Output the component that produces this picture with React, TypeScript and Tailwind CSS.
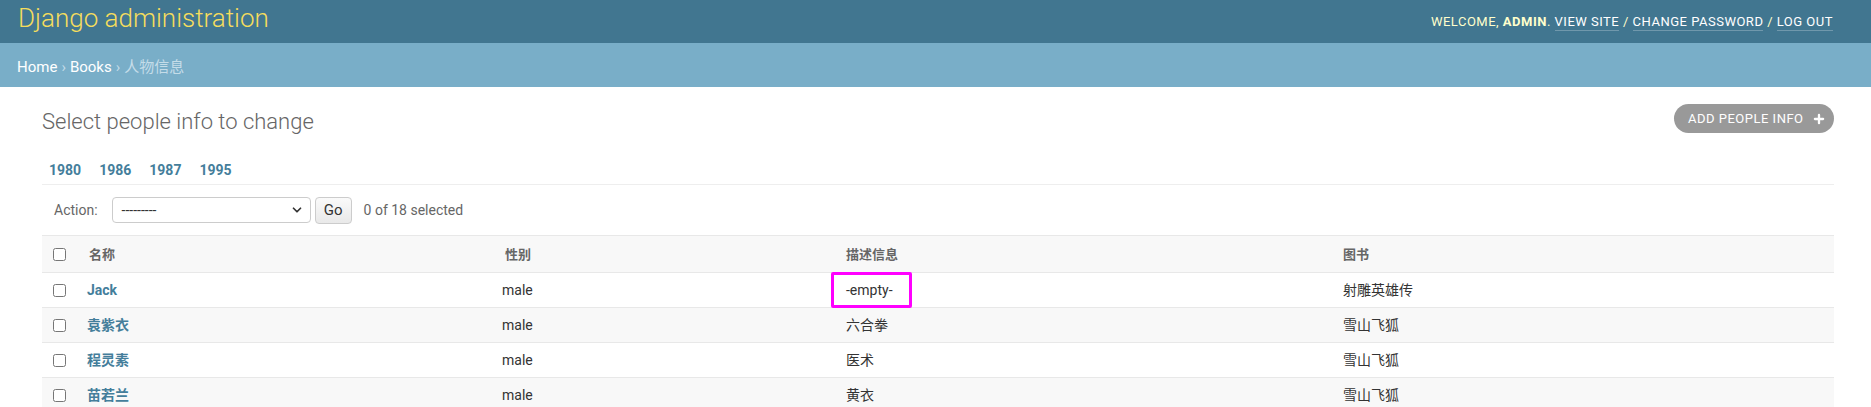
import React from 'react';
import { ChevronDown, Plus } from 'lucide-react';

const rows = [
  { name: 'Jack', gender: 'male', desc: '-empty-', book: '射雕英雄传', marked: true },
  { name: '袁紫衣', gender: 'male', desc: '六合拳', book: '雪山飞狐' },
  { name: '程灵素', gender: 'male', desc: '医术', book: '雪山飞狐' },
  { name: '苗若兰', gender: 'male', desc: '黄衣', book: '雪山飞狐' },
];

const years = ['1980', '1986', '1987', '1995'];

const cols = 'grid grid-cols-[36px_416px_341px_497px_1fr] items-center';

const Checkbox = () => (
  <input type="checkbox" className="w-[13px] h-[13px] m-0 block" />
);

const App: React.FC = () => {
  return (
    <div className="min-h-[407px] bg-white font-['Roboto','Noto_Sans_CJK_SC',sans-serif] text-[#333]">
      {/* Header */}
      <div className="h-[43px] bg-[#417690] flex items-center justify-between pl-[18px] pr-[38px]">
        <h1 className="text-[26px] font-light text-[#f5dd5d] leading-none -mt-[7px]">Django administration</h1>
        <div className="text-[13px] uppercase tracking-[0.5px] text-[#ffc]">
          WELCOME, <strong className="font-bold">ADMIN</strong>.{' '}
          <a className="text-white border-b border-white/25 pb-[1px]">View site</a> /{' '}
          <a className="text-white border-b border-white/25 pb-[1px]">Change password</a> /{' '}
          <a className="text-white border-b border-white/25 pb-[1px]">Log out</a>
        </div>
      </div>

      {/* Breadcrumbs */}
      <div className="h-[44px] bg-[#79aec8] flex items-center pl-[17px] pt-[4px] text-[15px] text-white">
        <a>Home</a>
        <span className="mx-[4px] text-[#c4dce8]">›</span>
        <a>Books</a>
        <span className="mx-[4px] text-[#c4dce8]">›</span>
        <span className="text-[#c4dce8]">人物信息</span>
      </div>

      {/* Content */}
      <div className="pl-[42px] pr-[37px]">
        <div className="flex items-center justify-between pt-[17px] h-[46px]">
          <h2 className="text-[22px] font-light text-[#666] mt-[6px]">Select people info to change</h2>
          <a className="h-[29px] w-[160px] rounded-full bg-[#999] text-white text-[13px] uppercase tracking-[0.5px] flex items-center pl-[14px] gap-[8px]">
            Add people info
            <Plus size={14} strokeWidth={4} />
          </a>
        </div>

        {/* Date hierarchy */}
        <div className="h-[52px] border-b border-[#eee] flex items-end pb-[4px] pl-[7px] gap-[18px]">
          {years.map((y) => (
            <a key={y} className="text-[14px] font-bold text-[#447e9b] leading-[20px]">
              {y}
            </a>
          ))}
        </div>

        {/* Actions */}
        <div className="h-[50px] flex items-center pl-[12px] text-[14px] text-[#666]">
          <span>Action:</span>
          <div className="ml-[14px] w-[199px] h-[26px] border border-[#ccc] rounded-[4px] flex items-center justify-between pl-[9px] pr-[6px] text-[#333] text-[14px]">
            <span>---------</span>
            <ChevronDown size={14} strokeWidth={3} className="text-[#333]" />
          </div>
          <div className="ml-[4px] w-[37px] h-[27px] border border-[#ccc] rounded-[4px] bg-gradient-to-b from-[#fafafa] to-[#e9e9e9] flex items-center justify-center text-[15px] text-[#333]">
            Go
          </div>
          <span className="ml-[12px]">0 of 18 selected</span>
        </div>

        {/* Results table */}
        <div className={`${cols} h-[38px] bg-[#f8f8f8] border-y border-[#e8e8e8] text-[13px] font-semibold text-[#666]`}>
          <div className="pl-[11px]"><Checkbox /></div>
          <div className="pl-[11px] pt-[1px]">名称</div>
          <div className="pl-[11px] pt-[1px]">性别</div>
          <div className="pl-[11px] pt-[1px]">描述信息</div>
          <div className="pl-[11px] pt-[1px]">图书</div>
        </div>
        {rows.map((r, i) => (
          <div
            key={r.name}
            className={`${cols} h-[35px] border-b border-[#e8e8e8] text-[14px] ${i % 2 === 1 ? 'bg-[#f8f8f8]' : 'bg-white'}`}
          >
            <div className="pl-[11px]"><Checkbox /></div>
            <div className="pl-[9px]"><a className="font-bold text-[#447e9b]">{r.name}</a></div>
            <div className="pl-[8px]">{r.gender}</div>
            <div className="pl-[11px]">
              <span className="relative inline-block">
                {r.desc}
                {r.marked && (
                  <span className="absolute -left-[15px] -right-[19px] -top-[8px] -bottom-[7px] border-[3px] border-[#ff00ff] rounded-[2px]" />
                )}
              </span>
            </div>
            <div className="pl-[11px]">{r.book}</div>
          </div>
        ))}
      </div>
    </div>
  );
};

export default App;
